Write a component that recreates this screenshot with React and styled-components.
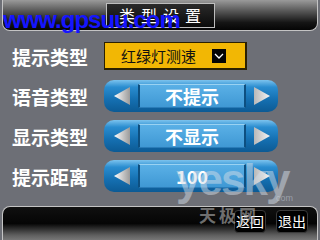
import styled, { createGlobalStyle } from "styled-components";

const GlobalStyle = createGlobalStyle`
  html, body {
    margin: 0;
    padding: 0;
    background: #6d6f76;
  }
`;

const Screen = styled.div`
  position: relative;
  width: 320px;
  height: 240px;
  overflow: hidden;
  display: flex;
  flex-direction: column;
  background: #6d6f76;
  font-family: "Noto Sans CJK SC", "Noto Sans", sans-serif;
`;

const TopBar = styled.div`
  height: 31px;
  margin: 0 2px;
  border: 1px solid #c4c4c4;
  border-top: none;
  border-radius: 0 0 8px 8px;
  background: linear-gradient(to bottom, #9a9a9a 0%, #5a5a5a 35%, #151515 75%, #050505 100%);
  display: flex;
  justify-content: center;
  align-items: flex-start;
  padding-top: 3px;
  box-sizing: border-box;
  flex-shrink: 0;
`;

const TitleBox = styled.div`
  width: 109px;
  height: 25px;
  box-sizing: border-box;
  border: 1px solid #bdbdbd;
  background: linear-gradient(to bottom, #2a2a2a, #0a0a0a);
  color: #ffffff;
  font-size: 16px;
  line-height: 23px;
  letter-spacing: 6px;
  text-align: center;
  padding-left: 6px;
  white-space: nowrap;
`;

const Form = styled.div`
  display: flex;
  flex-direction: column;
  gap: 8px;
  padding-top: 9px;
`;

const Row = styled.div`
  display: flex;
  align-items: center;
  height: 32px;
  padding-left: 12px;
`;

const Label = styled.div`
  width: 92px;
  color: #ffffff;
  font-size: 19px;
  font-weight: 700;
  line-height: 1;
  white-space: nowrap;
`;

const Dropdown = styled.div`
  width: 143px;
  height: 28px;
  box-sizing: border-box;
  background: #f2b704;
  border: 1px solid #2b2000;
  border-right-width: 2px;
  border-bottom-width: 2px;
  display: flex;
  align-items: center;
  padding-left: 16px;
  gap: 16px;
`;

const DropText = styled.span`
  color: #111111;
  font-size: 15px;
  line-height: 1;
  white-space: nowrap;
  flex-shrink: 0;
`;

const DropIcon = styled.div`
  width: 14px;
  height: 14px;
  flex-shrink: 0;
  background: #050505;
  display: flex;
  align-items: center;
  justify-content: center;
`;

const Spinner = styled.div`
  width: 174px;
  height: 32px;
  box-sizing: border-box;
  border-radius: 10px;
  background: linear-gradient(to bottom, #7cc3ee 0%, #2a8dd0 22%, #1570b2 60%, #0c5a94 100%);
  display: flex;
  align-items: center;
  padding: 0 2px;
`;

const ArrowCell = styled.div`
  width: ${(p) => p.$w}px;
  height: 100%;
  display: flex;
  align-items: center;
  justify-content: center;
  flex-shrink: 0;
`;

const ValueBox = styled.div`
  flex: 1;
  height: 24px;
  box-sizing: border-box;
  background: linear-gradient(to bottom, #5ab0e6, #3f98d4);
  border-top: 1px solid #9ad2f2;
  border-left: 2px solid #0d4f80;
  border-right: 2px solid #0d4f80;
  border-bottom: 1px solid #2a7cb8;
  color: #ffffff;
  font-size: 18px;
  font-weight: 700;
  line-height: 22px;
  text-align: center;
  white-space: nowrap;
`;

const BottomBar = styled.div`
  margin: auto 2px 0;
  height: 34px;
  box-sizing: border-box;
  border: 1px solid #c4c4c4;
  border-bottom: none;
  border-radius: 8px 8px 0 0;
  background: linear-gradient(to bottom, #101010 0%, #050505 50%, #5e5e5e 85%, #777777 100%);
  display: flex;
  justify-content: flex-end;
  align-items: flex-start;
  gap: 10px;
  padding: 3px 9px 0 0;
`;

const BarButton = styled.div`
  width: 32px;
  height: 23px;
  box-sizing: border-box;
  border-radius: 4px;
  background: #000000;
  border: 1px solid #3a3a3a;
  color: #ffffff;
  font-size: 14px;
  line-height: 21px;
  text-align: center;
  white-space: nowrap;
`;

const SiteMark = styled.div`
  position: absolute;
  left: 3px;
  top: 6px;
  color: #1515ff;
  font-family: "Liberation Sans", Arial, sans-serif;
  font-size: 24px;
  font-weight: 700;
  letter-spacing: -1px;
  pointer-events: none;
`;

const YeskyMark = styled.div`
  position: absolute;
  left: 176px;
  top: 158px;
  color: rgba(210, 220, 230, 0.5);
  font-family: "Liberation Sans", Arial, sans-serif;
  font-size: 44px;
  font-weight: 700;
  letter-spacing: -2px;
  line-height: 1;
  pointer-events: none;
`;

const YeskySub = styled.div`
  position: absolute;
  left: 199px;
  top: 202px;
  color: rgba(200, 200, 200, 0.55);
  font-size: 17px;
  font-weight: 700;
  letter-spacing: 3px;
  pointer-events: none;
`;

const YeskyCom = styled.div`
  position: absolute;
  left: 276px;
  top: 193px;
  color: rgba(200, 210, 220, 0.5);
  font-family: "Liberation Sans", Arial, sans-serif;
  font-size: 9px;
  pointer-events: none;
`;

const Triangle = ({ dir }) => (
  <svg width="17" height="18" viewBox="0 0 17 18">
    <defs>
      <linearGradient id={`tri-${dir}`} x1="0" y1="0" x2="1" y2="0">
        <stop offset="0" stopColor={dir === "left" ? "#ffffff" : "#b8b8b8"} />
        <stop offset="1" stopColor={dir === "left" ? "#9a9a9a" : "#f4f4f4"} />
      </linearGradient>
    </defs>
    {dir === "left" ? (
      <polygon points="0,9 16,0 16,18" fill={`url(#tri-${dir})`} />
    ) : (
      <polygon points="1,0 17,9 1,18" fill={`url(#tri-${dir})`} />
    )}
  </svg>
);

const SpinRow = ({ label, value }) => (
  <Row>
    <Label>{label}</Label>
    <Spinner>
      <ArrowCell $w={32}>
        <Triangle dir="left" />
      </ArrowCell>
      <ValueBox>{value}</ValueBox>
      <ArrowCell $w={30}>
        <Triangle dir="right" />
      </ArrowCell>
    </Spinner>
  </Row>
);

export default function App() {
  return (
    <Screen>
      <GlobalStyle />
      <TopBar>
        <TitleBox>类型设置</TitleBox>
      </TopBar>
      <Form>
        <Row>
          <Label>提示类型</Label>
          <Dropdown>
            <DropText>红绿灯测速</DropText>
            <DropIcon>
              <svg width="10" height="6" viewBox="0 0 10 6">
                <polyline points="1,1 5,5 9,1" fill="none" stroke="#ffffff" strokeWidth="1.3" />
              </svg>
            </DropIcon>
          </Dropdown>
        </Row>
        <SpinRow label="语音类型" value="不提示" />
        <SpinRow label="显示类型" value="不显示" />
        <SpinRow label="提示距离" value="100" />
      </Form>
      <BottomBar>
        <BarButton>返回</BarButton>
        <BarButton>退出</BarButton>
      </BottomBar>
      <SiteMark>www.gpsuu.com</SiteMark>
      <YeskyMark>yesky</YeskyMark>
      <YeskyCom>com</YeskyCom>
      <YeskySub>天极网</YeskySub>
    </Screen>
  );
}
